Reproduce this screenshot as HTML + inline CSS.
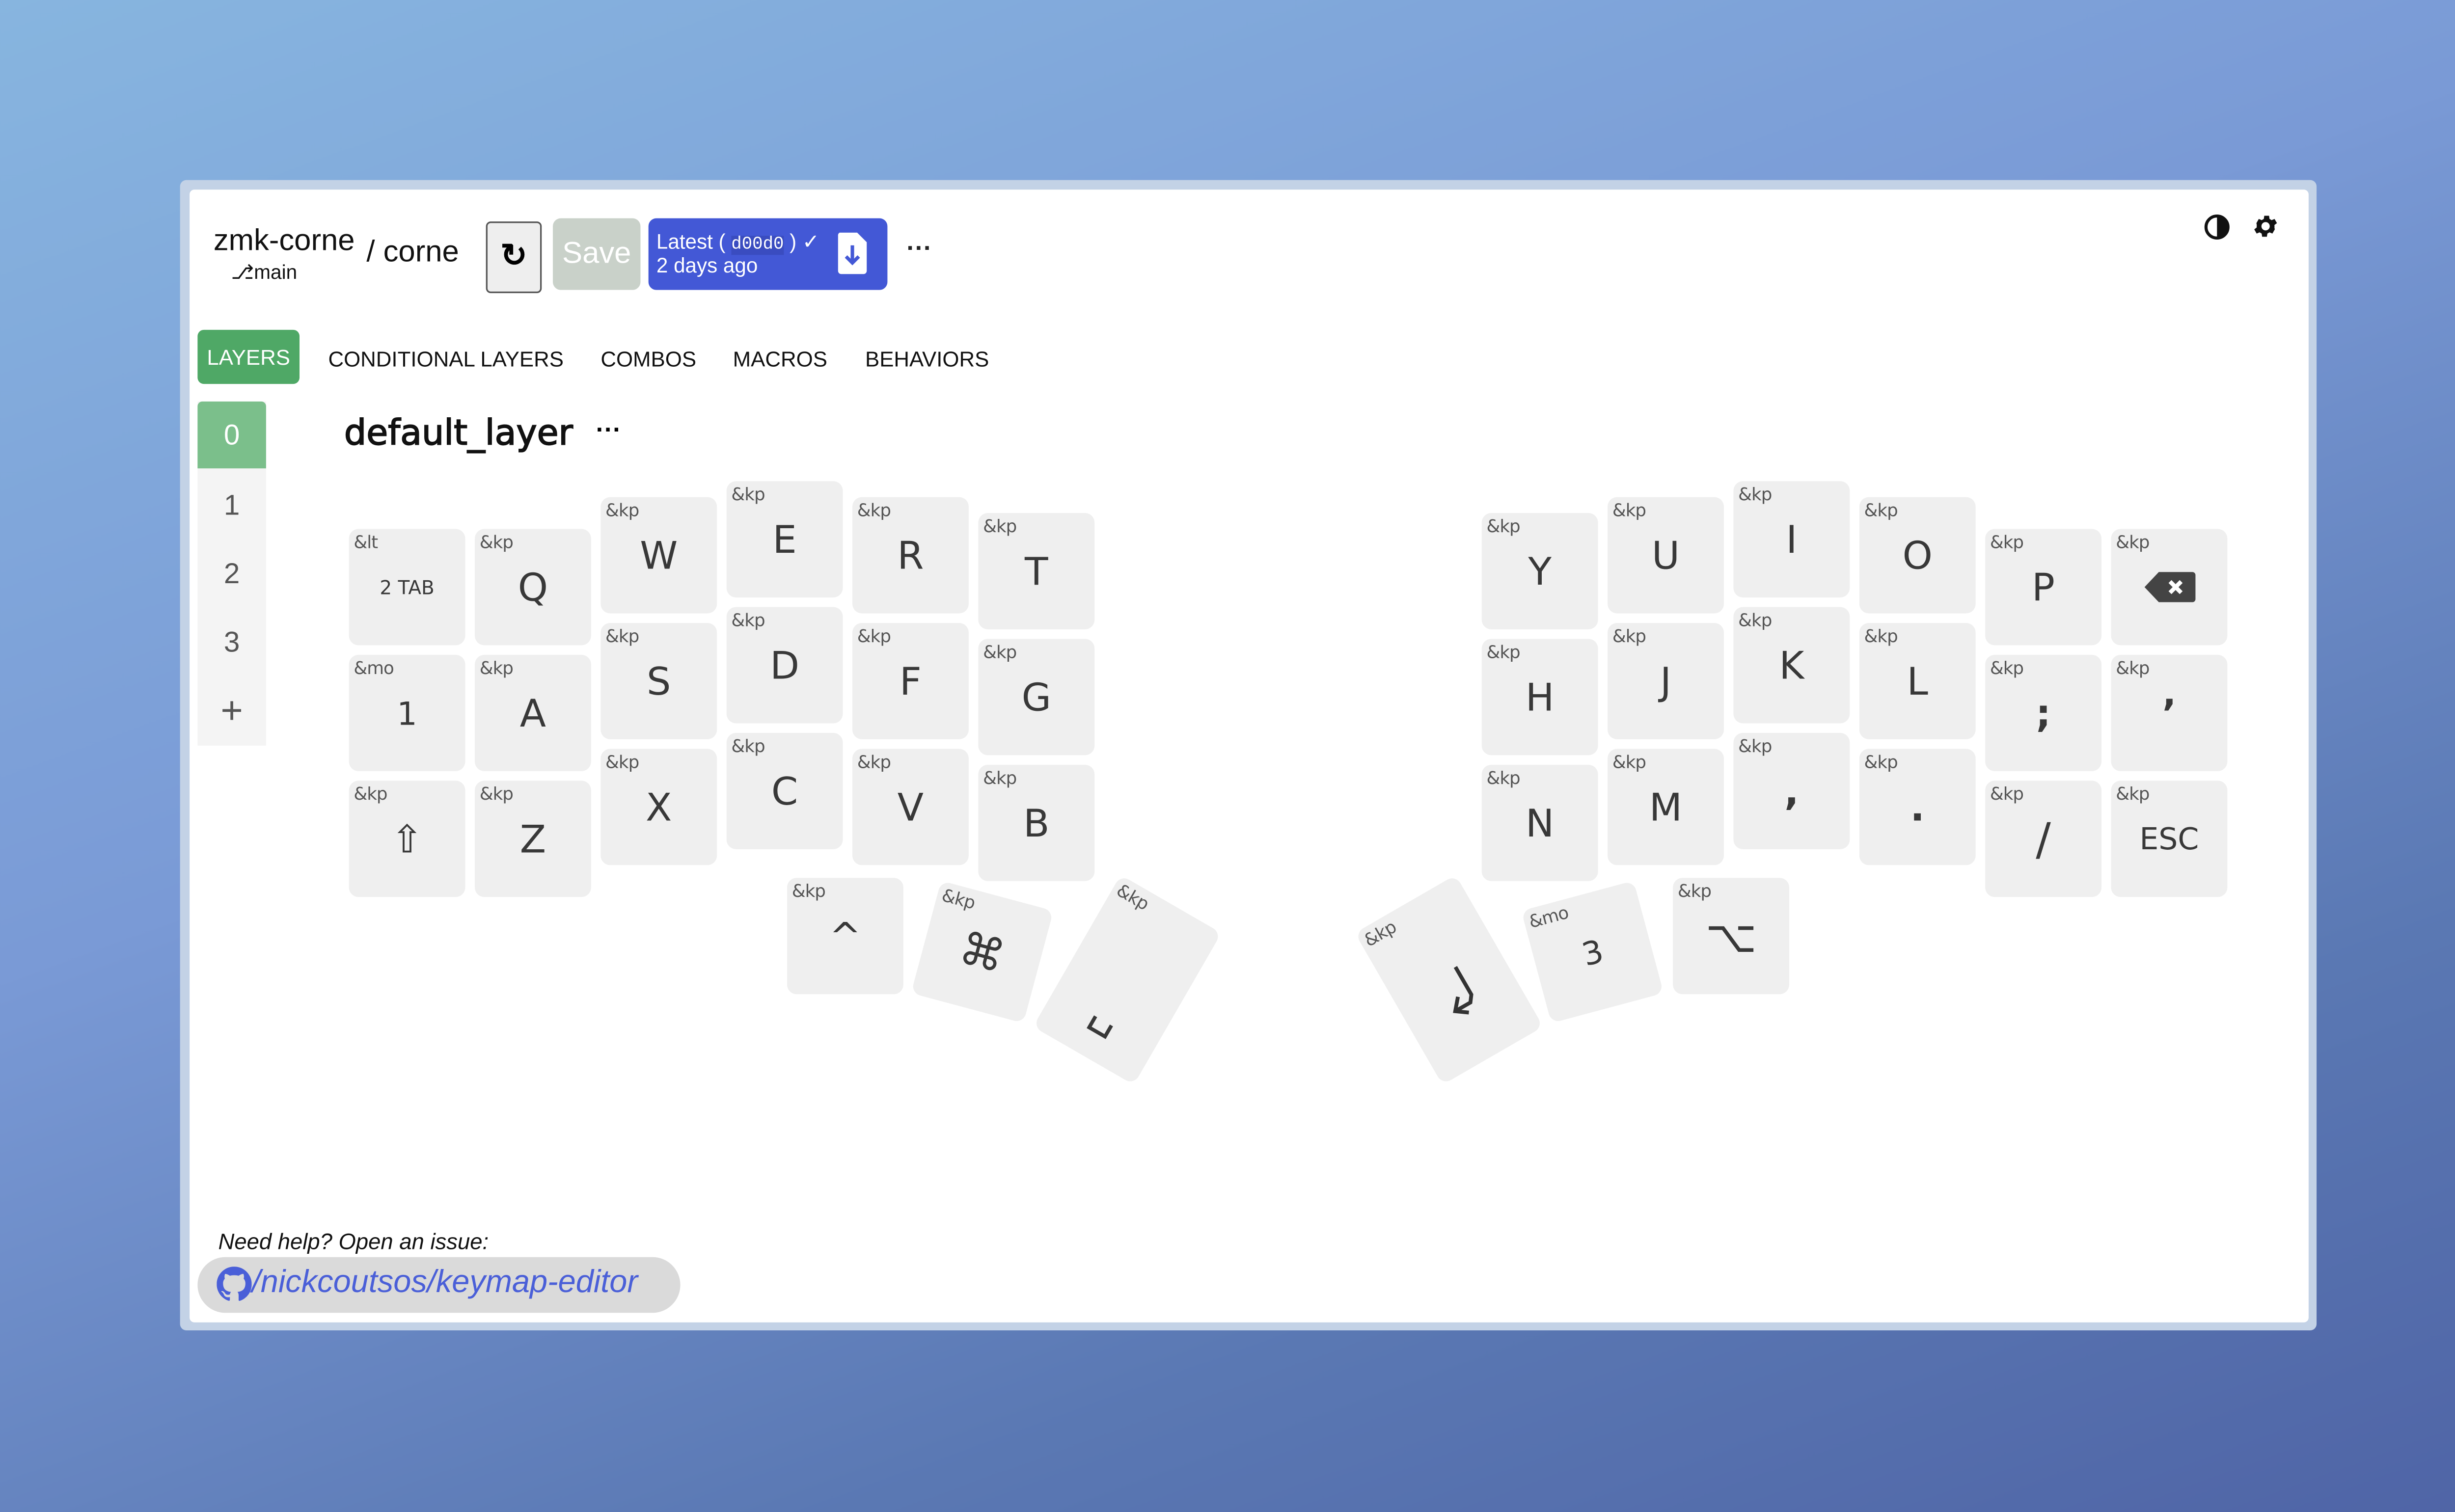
<!DOCTYPE html>
<html><head><meta charset="utf-8"><style>
html,body{margin:0;padding:0;width:5088px;height:3080px;overflow:hidden}
body{background:linear-gradient(160deg,#87b5df 0%,#7a9ad6 40%,#5a78b3 75%,#4f64a6 100%);font-family:"Liberation Sans",sans-serif}
#s{position:absolute;left:0;top:0;width:1568px;height:949px;transform:scale(3.2449,3.2455);transform-origin:0 0}
.win{position:absolute;left:113px;top:113px;width:1341px;height:722px;background:#c3d2e6;border-radius:4px}
.in{position:absolute;left:6px;top:6px;width:1330px;height:711px;background:#fff;border-radius:3px}
.a{position:absolute}
.k{position:absolute;width:73px;height:73px;background:#efefef;border-radius:6px;color:#333}
.k .l{position:absolute;left:3px;top:2px;font-size:11px;color:#555;font-family:"DejaVu Sans",sans-serif;letter-spacing:-.3px}
.k .v{position:absolute;left:0;right:0;top:50%;transform:translateY(-50%);text-align:center;font-size:24px;font-family:"DejaVu Sans",sans-serif;font-weight:normal;color:#383838}
.tab{position:absolute;top:218px;font-size:13.5px;color:#111}
.ly{position:absolute;left:124px;width:43px;height:42px;text-align:center;line-height:42px;font-size:18px;color:#555}
</style></head><body><div id="s">
<div class="win"><div class="in"></div></div>

<div class="a" style="left:134px;top:141px;font-size:19px;color:#111">zmk-corne</div>
<div class="a" style="left:145px;top:163px;font-size:12.5px;color:#111">&#x2387;main</div>
<div class="a" style="left:230px;top:148px;font-size:19px;color:#111">/ corne</div>
<div class="a" style="left:305px;top:139px;width:33px;height:43px;border:1.5px solid #555;border-radius:3px;background:#eee;text-align:center;line-height:43px;font-size:20px;font-weight:bold">&#x21bb;</div>
<div class="a" style="left:347px;top:137px;width:55px;height:45px;background:#c9d1c9;border-radius:5px;color:#fff;font-size:19px;text-align:center;line-height:45px">Save</div>
<div class="a" style="left:407px;top:137px;width:150px;height:45px;background:#4358d6;border-radius:5px;color:#fff">
 <div class="a" style="left:5px;top:7px;font-size:13px;white-space:nowrap">Latest ( <span style="font-family:'Liberation Mono',monospace;font-size:11px;background:#3a4cc0">d00d0</span> ) &#x2713;</div>
 <div class="a" style="left:5px;top:22px;font-size:13px">2 days ago</div>
 <svg class="a" style="left:118px;top:8px" width="20" height="28" viewBox="0 0 20 28"><path d="M2 1h11l6 6v18a2 2 0 0 1-2 2H3a2 2 0 0 1-2-2V3a2 2 0 0 1 1-2z" fill="#fff"/><path d="M10 9v11M6 16l4 4 4-4" stroke="#4358d6" stroke-width="2.2" fill="none"/></svg>
</div>
<div class="a" style="left:569px;top:148px;font-size:16px;font-weight:bold;color:#222">&middot;&middot;&middot;</div>
<svg class="a" style="left:1383px;top:134px" width="17" height="17" viewBox="0 0 16 16"><circle cx="8" cy="8" r="6.5" fill="none" stroke="#111" stroke-width="1.8"/><path d="M8 1.5a6.5 6.5 0 0 1 0 13z" fill="#111"/></svg>
<svg class="a" style="left:1413px;top:133px" width="18" height="18" viewBox="0 0 24 24"><path fill="#111" d="M19.4 13a7.5 7.5 0 0 0 0-2l2.1-1.6-2-3.5-2.5 1a7 7 0 0 0-1.7-1l-.4-2.7h-4l-.4 2.7a7 7 0 0 0-1.7 1l-2.5-1-2 3.5L4.6 11a7.5 7.5 0 0 0 0 2l-2.1 1.6 2 3.5 2.5-1a7 7 0 0 0 1.7 1l.4 2.7h4l.4-2.7a7 7 0 0 0 1.7-1l2.5 1 2-3.5zM12 15.5a3.5 3.5 0 1 1 0-7 3.5 3.5 0 0 1 0 7z"/></svg>

<div class="a" style="left:124px;top:207px;width:64px;height:34px;background:#4fa866;border-radius:4px;color:#fff;font-size:13.5px;text-align:center;line-height:35px">LAYERS</div>
<div class="tab" style="left:206px">CONDITIONAL LAYERS</div>
<div class="tab" style="left:377px">COMBOS</div>
<div class="tab" style="left:460px">MACROS</div>
<div class="tab" style="left:543px">BEHAVIORS</div>

<div class="a" style="left:124px;top:252px;width:43px;height:216px;background:#f4f4f4"></div>
<div class="ly" style="top:252px;background:#7bbf8b;color:#fff;border-radius:3px 3px 0 0">0</div>
<div class="ly" style="top:296px">1</div>
<div class="ly" style="top:339px">2</div>
<div class="ly" style="top:382px">3</div>
<div class="ly" style="top:426px;font-size:24px">+</div>

<div class="a" style="left:216px;top:260px;font-size:22px;color:#111;font-family:'DejaVu Sans',sans-serif;-webkit-text-stroke:0.6px #111">default_layer</div>
<div class="a" style="left:374px;top:262px;font-size:16px;font-weight:bold">&middot;&middot;&middot;</div>

<!-- left -->
<div class="k" style="left:219px;top:332px"><span class="l">&amp;lt</span><span class="v" style="font-size:12px">2 TAB</span></div>
<div class="k" style="left:219px;top:411px"><span class="l">&amp;mo</span><span class="v" style="font-size:20px">1</span></div>
<div class="k" style="left:219px;top:490px"><span class="l">&amp;kp</span><span class="v">&#x21e7;</span></div>
<div class="k" style="left:298px;top:332px"><span class="l">&amp;kp</span><span class="v">Q</span></div>
<div class="k" style="left:298px;top:411px"><span class="l">&amp;kp</span><span class="v">A</span></div>
<div class="k" style="left:298px;top:490px"><span class="l">&amp;kp</span><span class="v">Z</span></div>
<div class="k" style="left:377px;top:312px"><span class="l">&amp;kp</span><span class="v">W</span></div>
<div class="k" style="left:377px;top:391px"><span class="l">&amp;kp</span><span class="v">S</span></div>
<div class="k" style="left:377px;top:470px"><span class="l">&amp;kp</span><span class="v">X</span></div>
<div class="k" style="left:456px;top:302px"><span class="l">&amp;kp</span><span class="v">E</span></div>
<div class="k" style="left:456px;top:381px"><span class="l">&amp;kp</span><span class="v">D</span></div>
<div class="k" style="left:456px;top:460px"><span class="l">&amp;kp</span><span class="v">C</span></div>
<div class="k" style="left:535px;top:312px"><span class="l">&amp;kp</span><span class="v">R</span></div>
<div class="k" style="left:535px;top:391px"><span class="l">&amp;kp</span><span class="v">F</span></div>
<div class="k" style="left:535px;top:470px"><span class="l">&amp;kp</span><span class="v">V</span></div>
<div class="k" style="left:614px;top:322px"><span class="l">&amp;kp</span><span class="v">T</span></div>
<div class="k" style="left:614px;top:401px"><span class="l">&amp;kp</span><span class="v">G</span></div>
<div class="k" style="left:614px;top:480px"><span class="l">&amp;kp</span><span class="v">B</span></div>
<!-- right -->
<div class="k" style="left:930px;top:322px"><span class="l">&amp;kp</span><span class="v">Y</span></div>
<div class="k" style="left:930px;top:401px"><span class="l">&amp;kp</span><span class="v">H</span></div>
<div class="k" style="left:930px;top:480px"><span class="l">&amp;kp</span><span class="v">N</span></div>
<div class="k" style="left:1009px;top:312px"><span class="l">&amp;kp</span><span class="v">U</span></div>
<div class="k" style="left:1009px;top:391px"><span class="l">&amp;kp</span><span class="v">J</span></div>
<div class="k" style="left:1009px;top:470px"><span class="l">&amp;kp</span><span class="v">M</span></div>
<div class="k" style="left:1088px;top:302px"><span class="l">&amp;kp</span><span class="v">I</span></div>
<div class="k" style="left:1088px;top:381px"><span class="l">&amp;kp</span><span class="v">K</span></div>
<div class="k" style="left:1088px;top:460px"><span class="l">&amp;kp</span><span class="v" style="font-weight:bold">,</span></div>
<div class="k" style="left:1167px;top:312px"><span class="l">&amp;kp</span><span class="v">O</span></div>
<div class="k" style="left:1167px;top:391px"><span class="l">&amp;kp</span><span class="v">L</span></div>
<div class="k" style="left:1167px;top:470px"><span class="l">&amp;kp</span><span class="v" style="font-weight:bold">.</span></div>
<div class="k" style="left:1246px;top:332px"><span class="l">&amp;kp</span><span class="v">P</span></div>
<div class="k" style="left:1246px;top:411px"><span class="l">&amp;kp</span><span class="v" style="font-weight:bold">;</span></div>
<div class="k" style="left:1246px;top:490px"><span class="l">&amp;kp</span><span class="v" style="font-size:28px">/</span></div>
<div class="k" style="left:1325px;top:332px"><span class="l">&amp;kp</span><svg class="a" style="left:21px;top:27px" width="32" height="19" viewBox="0 0 32 19"><path d="M9 0h21a2 2 0 0 1 2 2v15a2 2 0 0 1-2 2H9L0 9.5z" fill="#444"/><path d="M16 6l7 7M23 6l-7 7" stroke="#fff" stroke-width="2.6"/></svg></div>
<div class="k" style="left:1325px;top:411px"><span class="l">&amp;kp</span><span class="v" style="font-weight:bold">&#x2019;</span></div>
<div class="k" style="left:1325px;top:490px"><span class="l">&amp;kp</span><span class="v" style="font-size:19px">ESC</span></div>
<!-- thumbs -->
<div class="k" style="left:494px;top:551px"><span class="l">&amp;kp</span><span class="v">^</span></div>
<div class="k" style="left:580px;top:561px;transform:rotate(15deg)"><span class="l">&amp;kp</span><span class="v" style="font-size:28px">&#x2318;</span></div>
<div class="k" style="left:671px;top:560px;height:110px;transform:rotate(30deg)"><span class="l">&amp;kp</span><span class="v" style="transform:translateY(20%);font-size:28px">&#x2423;</span></div>
<div class="k" style="left:873px;top:560px;height:110px;transform:rotate(-30deg)"><span class="l">&amp;kp</span><svg class="a" style="left:26px;top:48px" width="24" height="36" viewBox="0 0 24 36"><path d="M18 2v20l-3 4H4M10 19l-6 7 7 5" stroke="#333" stroke-width="2.4" fill="none"/></svg></div>
<div class="k" style="left:963px;top:561px;transform:rotate(-15deg)"><span class="l">&amp;mo</span><span class="v" style="font-size:20px">3</span></div>
<div class="k" style="left:1050px;top:551px"><span class="l">&amp;kp</span><span class="v" style="font-size:28px">&#x2325;</span></div>

<div class="a" style="left:137px;top:771px;font-size:14px;font-style:italic;color:#111">Need help? Open an issue:</div>
<div class="a" style="left:124px;top:789px;width:303px;height:35px;background:#dadada;border-radius:18px"></div>
<svg class="a" style="left:136px;top:795px" width="22" height="22" viewBox="0 0 16 16"><path fill="#4a5fd8" d="M8 0C3.58 0 0 3.58 0 8c0 3.540 2.290 6.530 5.470 7.590.4.07.55-.17.55-.38v-1.33c-2.23.48-2.7-1.07-2.7-1.070-.36-.92-.89-1.17-.89-1.17-.73-.5.06-.49.06-.49.8.06 1.23.83 1.23.83.71 1.230 1.870.87 2.330.66.07-.52.28-.87.51-1.07-1.78-.2-3.64-.89-3.64-3.950 0-.87.31-1.59.82-2.150-.08-.2-.36-1.020.08-2.120 0 0 .67-.21 2.2.82a7.6 7.6 0 0 1 4 0c1.53-1.04 2.2-.82 2.2-.82.44 1.1.16 1.920.08 2.120.51.56.82 1.270.82 2.150 0 3.070-1.870 3.750-3.650 3.950.29.25.54.73.54 1.480v2.2c0 .21.15.46.55.38A8 8 0 0 0 16 8c0-4.42-3.58-8-8-8z"/></svg>
<div class="a" style="left:158px;top:794px;font-size:20px;font-style:italic;color:#4a5fd8">/nickcoutsos/keymap-editor</div>
</div></body></html>
